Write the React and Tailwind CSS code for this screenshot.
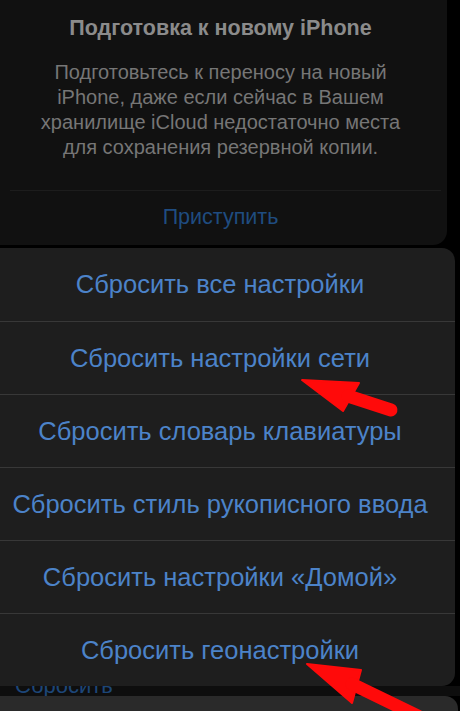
import React from "react";

const resetOptions = [
  "Сбросить все настройки",
  "Сбросить настройки сети",
  "Сбросить словарь клавиатуры",
  "Сбросить стиль рукописного ввода",
  "Сбросить настройки «Домой»",
  "Сбросить геонастройки",
];

function PrepareCard() {
  return (
    <div className="w-[447px] h-[245px] bg-[#111111] rounded-br-[14px] flex flex-col pr-[6px]">
      <h2 className="pt-[14px] h-[42px] leading-[28px] text-[21.5px] font-bold text-center text-[#8b8b8b]">
        Подготовка к новому iPhone
      </h2>
      <p className="mt-[18px] h-[100px] text-[20px] leading-[25px] text-center text-[#767676]">
        Подготовьтесь к переносу на новый
        <br />
        iPhone, даже если сейчас в Вашем
        <br />
        хранилище iCloud недостаточно места
        <br />
        для сохранения резервной копии.
      </p>
      <div className="mt-[30px] ml-[10px] h-px bg-[#1d1d1d]" />
      <button className="flex-1 text-[21.5px] text-[#1f4c80] pb-[2px]">
        Приступить
      </button>
    </div>
  );
}

function ActionSheet() {
  return (
    <div className="relative z-10 mt-[3px] w-[455px] bg-[#1e1e1e] rounded-tr-[13px] rounded-br-[13px]">
      {resetOptions.map((label, i) => (
        <div
          key={label}
          className={`h-[73px] flex items-center justify-center pr-[15px] text-[25.5px] text-[#4c83c9] ${
            i > 0 ? "border-t border-[#383838]" : ""
          }`}
        >
          {label}
        </div>
      ))}
    </div>
  );
}

function Arrows() {
  return (
    <svg
      className="absolute inset-0 pointer-events-none z-20"
      width="460"
      height="711"
      viewBox="0 0 460 711"
    >
      <g fill="#ff0a0a" stroke="#ff0a0a" strokeLinejoin="round">
        <polygon points="302,380 359,383 343,411" strokeWidth="2" />
        <line x1="348" y1="396" x2="391" y2="410" strokeWidth="13" strokeLinecap="round" />
        <polygon points="307,664 361,670 352,703" strokeWidth="2" />
        <line x1="352" y1="684" x2="418" y2="716" strokeWidth="13" strokeLinecap="round" />
      </g>
    </svg>
  );
}

export default function App() {
  return (
    <div
      className="relative w-[460px] h-[711px] overflow-hidden bg-black"
      style={{ fontFamily: '"Liberation Sans", Arial, sans-serif' }}
    >
      <PrepareCard />
      <ActionSheet />
      {/* the settings row underneath, mostly hidden by the sheet */}
      <div className="h-[10px] bg-[#0e0e0e] overflow-hidden">
        <div className="-mt-[13px] pl-[15px] text-[22px] leading-[26px] text-[#1d4678]">
          Сбросить
        </div>
      </div>
      <div className="w-[458px] h-[40px] bg-[#2a2a2a] rounded-tr-[13px]" />
      <Arrows />
    </div>
  );
}
